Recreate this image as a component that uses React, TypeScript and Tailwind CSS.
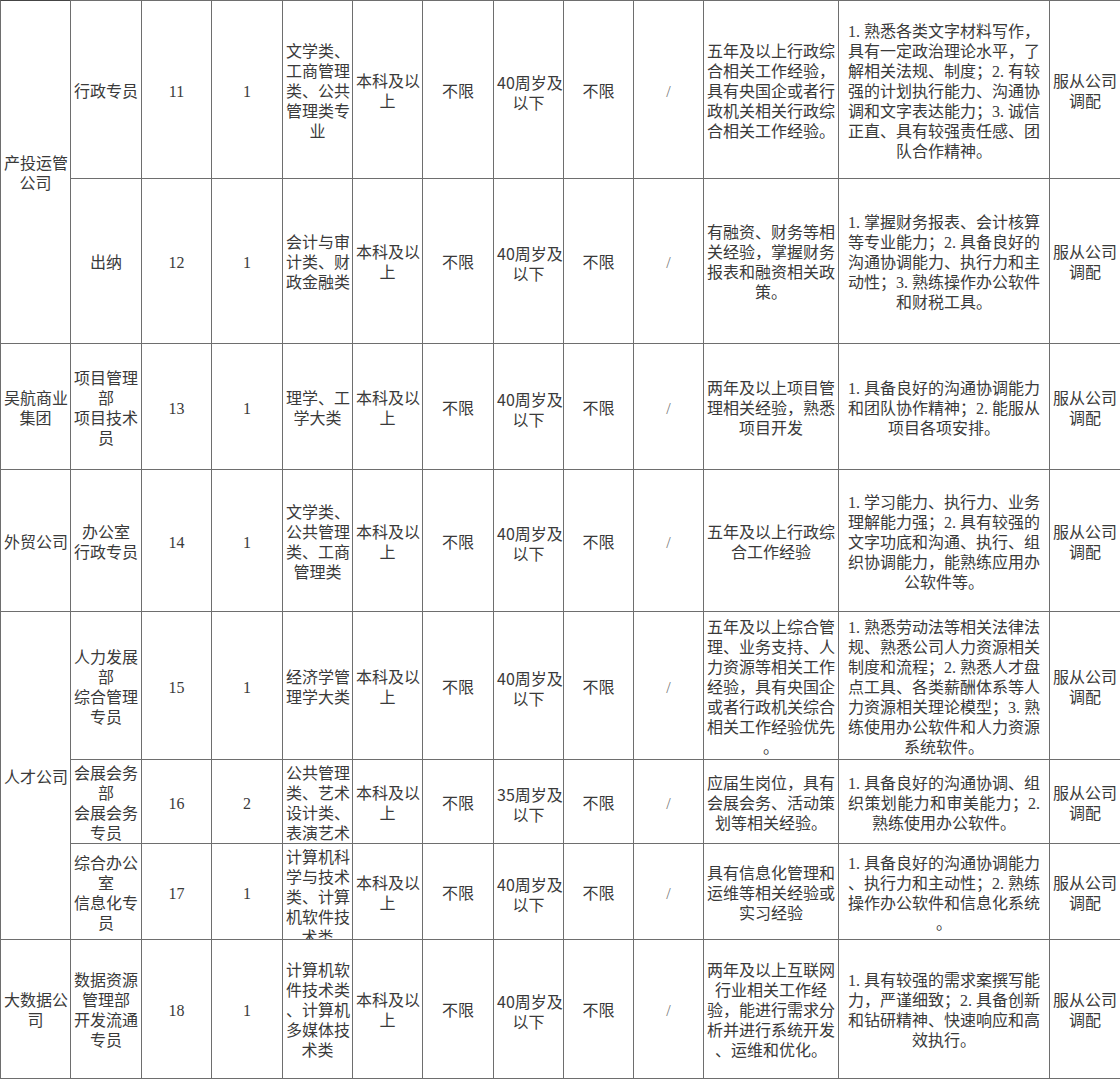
type Row = {
  company?: { lines: string[]; span: string };
  position: string[];
  no: string;
  count: string;
  major: string[];
  age: string[];
  exp: string[];
  req: string[];
};

const rows: Row[] = [
  {
    company: { lines: ["产投运管", "公司"], span: "row-span-2" },
    position: ["行政专员"],
    no: "11",
    count: "1",
    major: ["文学类、", "工商管理", "类、公共", "管理类专", "业"],
    age: ["40周岁及", "以下"],
    exp: ["五年及以上行政综", "合相关工作经验，", "具有央国企或者行", "政机关相关行政综", "合相关工作经验。"],
    req: [
      "1. 熟悉各类文字材料写作，",
      "具有一定政治理论水平，了",
      "解相关法规、制度；2. 有较",
      "强的计划执行能力、沟通协",
      "调和文字表达能力；3. 诚信",
      "正直、具有较强责任感、团",
      "队合作精神。",
    ],
  },
  {
    position: ["出纳"],
    no: "12",
    count: "1",
    major: ["会计与审", "计类、财", "政金融类"],
    age: ["40周岁及", "以下"],
    exp: ["有融资、财务等相", "关经验，掌握财务", "报表和融资相关政", "策。"],
    req: [
      "1. 掌握财务报表、会计核算",
      "等专业能力；2. 具备良好的",
      "沟通协调能力、执行力和主",
      "动性；3. 熟练操作办公软件",
      "和财税工具。",
    ],
  },
  {
    company: { lines: ["吴航商业", "集团"], span: "" },
    position: ["项目管理", "部", "项目技术", "员"],
    no: "13",
    count: "1",
    major: ["理学、工", "学大类"],
    age: ["40周岁及", "以下"],
    exp: ["两年及以上项目管", "理相关经验，熟悉", "项目开发"],
    req: ["1. 具备良好的沟通协调能力", "和团队协作精神；2. 能服从", "项目各项安排。"],
  },
  {
    company: { lines: ["外贸公司"], span: "" },
    position: ["办公室", "行政专员"],
    no: "14",
    count: "1",
    major: ["文学类、", "公共管理", "类、工商", "管理类"],
    age: ["40周岁及", "以下"],
    exp: ["五年及以上行政综", "合工作经验"],
    req: [
      "1. 学习能力、执行力、业务",
      "理解能力强；2. 具有较强的",
      "文字功底和沟通、执行、组",
      "织协调能力，能熟练应用办",
      "公软件等。",
    ],
  },
  {
    company: { lines: ["人才公司"], span: "row-span-3" },
    position: ["人力发展", "部", "综合管理", "专员"],
    no: "15",
    count: "1",
    major: ["经济学管", "理学大类"],
    age: ["40周岁及", "以下"],
    exp: [
      "五年及以上综合管",
      "理、业务支持、人",
      "力资源等相关工作",
      "经验，具有央国企",
      "或者行政机关综合",
      "相关工作经验优先",
      "。",
    ],
    req: [
      "1. 熟悉劳动法等相关法律法",
      "规、熟悉公司人力资源相关",
      "制度和流程；2. 熟悉人才盘",
      "点工具、各类薪酬体系等人",
      "力资源相关理论模型；3. 熟",
      "练使用办公软件和人力资源",
      "系统软件。",
    ],
  },
  {
    position: ["会展会务", "部", "会展会务", "专员"],
    no: "16",
    count: "2",
    major: ["公共管理", "类、艺术", "设计类、", "表演艺术", "类"],
    age: ["35周岁及", "以下"],
    exp: ["应届生岗位，具有", "会展会务、活动策", "划等相关经验。"],
    req: ["1. 具备良好的沟通协调、组", "织策划能力和审美能力；2.", "熟练使用办公软件。"],
  },
  {
    position: ["综合办公", "室", "信息化专", "员"],
    no: "17",
    count: "1",
    major: ["计算机科", "学与技术", "类、计算", "机软件技", "术类"],
    age: ["40周岁及", "以下"],
    exp: ["具有信息化管理和", "运维等相关经验或", "实习经验"],
    req: ["1. 具备良好的沟通协调能力", "、执行力和主动性；2. 熟练", "操作办公软件和信息化系统", "。"],
  },
  {
    company: { lines: ["大数据公", "司"], span: "" },
    position: ["数据资源", "管理部", "开发流通", "专员"],
    no: "18",
    count: "1",
    major: ["计算机软", "件技术类", "、计算机", "多媒体技", "术类"],
    age: ["40周岁及", "以下"],
    exp: ["两年及以上互联网", "行业相关工作经", "验，能进行需求分", "析并进行系统开发", "、运维和优化。"],
    req: ["1. 具有较强的需求案撰写能", "力，严谨细致；2. 具备创新", "和钻研精神、快速响应和高", "效执行。"],
  },
];

function Cell({
  lines,
  className = "",
  justify = false,
}: {
  lines: string[];
  className?: string;
  justify?: boolean;
}) {
  return (
    <div
      className={`border-l border-t border-[#6e6e6e] overflow-hidden flex flex-col [justify-content:safe_center] pt-[4px] px-[3px] text-center ${className}`}
    >
      {lines.map((l, i) => (
        <div
          key={i}
          className={
            justify && i < lines.length - 1
              ? "whitespace-nowrap text-justify [text-align-last:justify]"
              : "whitespace-nowrap"
          }
        >
          {l}
        </div>
      ))}
    </div>
  );
}

export default function App() {
  return (
    <div className="w-[1120px] bg-white font-['Liberation_Serif','Noto_Sans_CJK_SC',serif] text-[16px] leading-[20px] text-[#3a3a3a]">
      <div className="grid grid-cols-[70px_71px_70px_71px_70px_70px_71px_70px_70px_70px_135px_211px_71px] grid-rows-[178px_165px_126px_142px_148px_84px_96px_139px] border-b border-[#6e6e6e] [&>div:first-child]:border-t-[#444]">
        {rows.map((r) => (
          <>
            {r.company && <Cell key={r.no + "c"} lines={r.company.lines} className={r.company.span} />}
            <Cell key={r.no + "p"} lines={r.position} />
            <Cell key={r.no + "n"} lines={[r.no]} />
            <Cell key={r.no + "k"} lines={[r.count]} />
            <Cell key={r.no + "m"} lines={r.major} />
            <Cell key={r.no + "e"} lines={["本科及以", "上"]} />
            <Cell key={r.no + "g"} lines={["不限"]} />
            <Cell key={r.no + "a"} lines={r.age} className="font-['Noto_Sans_CJK_SC',sans-serif]" />
            <Cell key={r.no + "z"} lines={["不限"]} />
            <Cell key={r.no + "s"} lines={["/"]} className="text-[#777]" />
            <Cell key={r.no + "x"} lines={r.exp} />
            <Cell key={r.no + "r"} lines={r.req} justify className="px-[9px]" />
            <Cell key={r.no + "f"} lines={["服从公司", "调配"]} />
          </>
        ))}
      </div>
    </div>
  );
}
